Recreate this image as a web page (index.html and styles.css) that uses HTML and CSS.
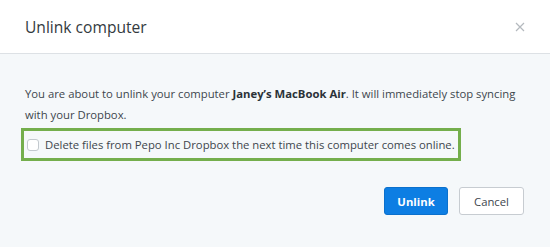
FILE: index.html
```html
<!DOCTYPE html>
<html lang="en">
<head>
  <meta charset="UTF-8" />
  <title>Unlink computer</title>
  <link rel="stylesheet" href="styles.css">
</head>
<body>

  <div class="modal">
    <div class="modal-header">
      <h2>Unlink computer</h2>
      <button class="close" aria-label="Close">
        <svg width="10" height="10" viewBox="0 0 10 10">
          <path d="M1 1 L9 9 M9 1 L1 9" stroke="#b4b9be" stroke-width="1.2" fill="none"/>
        </svg>
      </button>
    </div>

    <div class="modal-body">
      <p>You are about to unlink your computer <strong>Janey’s MacBook Air</strong>. It will immediately stop syncing with your Dropbox.</p>

      <label class="option">
        <input type="checkbox" />
        <span>Delete files from Pepo Inc Dropbox the next time this computer comes online.</span>
      </label>
    </div>

    <div class="modal-footer">
      <button class="btn btn-primary">Unlink</button>
      <button class="btn">Cancel</button>
    </div>
  </div>

</body>
</html>
```

FILE: styles.css
```css
* {
  margin: 0;
  padding: 0;
  box-sizing: border-box;
}

html, body {
  height: 100%;
  font-family: 'Open Sans', sans-serif;
  color: #3d464d;
  background: #f5f8fa;
}

.modal {
  height: 100%;
  display: flex;
  flex-direction: column;
}

.modal-header {
  height: 54px;
  background: #fff;
  border-bottom: 1px solid #dde1e5;
  display: flex;
  align-items: center;
  justify-content: space-between;
  padding: 0 25px 0 25px;
}

.modal-header h2 {
  font-size: 15.6px;
  font-weight: 400;
  color: #333a40;
}

.close {
  background: none;
  border: none;
  width: 10px;
  height: 10px;
  display: flex;
  cursor: pointer;
}

.modal-body {
  padding: 29px 25px 0 21px;
}

.modal-body p {
  font-size: 11.3px;
  line-height: 21px;
  padding-left: 4px;
}

.modal-body strong {
  font-weight: 700;
  color: #2b3237;
}

.option {
  display: inline-flex;
  align-items: center;
  margin-top: 3px;
  height: 33px;
  border: 3px solid #74ae4c;
  padding: 0 3px 0 3px;
  font-size: 11.3px;
  cursor: pointer;
}

.option input {
  appearance: none;
  width: 12px;
  height: 12px;
  border: 1px solid #c3c9ce;
  border-radius: 3px;
  background: #fff;
  margin-right: 6px;
}

.modal-footer {
  display: flex;
  justify-content: flex-end;
  gap: 11px;
  padding: 26px 26px 0 0;
}

.btn {
  height: 28px;
  width: 65px;
  font-family: 'Open Sans', sans-serif;
  font-size: 11.3px;
  color: #3d464d;
  background: #fff;
  border: 1px solid #c7ccd1;
  border-radius: 3px;
  cursor: pointer;
}

.btn-primary {
  width: 64px;
  background: #0d7ee3;
  border-color: #0b70cc;
  color: #fff;
  font-weight: 700;
}
```
